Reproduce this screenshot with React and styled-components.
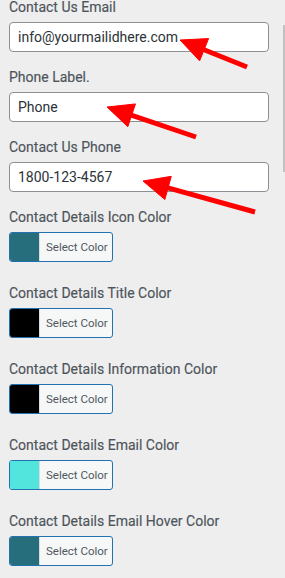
import React from 'react';
import styled, { createGlobalStyle } from 'styled-components';

const GlobalStyle = createGlobalStyle`
  html, body {
    margin: 0;
    padding: 0;
    background: #eeeeee;
    overflow: hidden;
  }
  * { box-sizing: border-box; }
`;

const Page = styled.div`
  position: relative;
  width: 285px;
  height: 578px;
  overflow: hidden;
  background: #eeeeee;
  font-family: Roboto, 'Liberation Sans', sans-serif;
`;

const Panel = styled.div`
  display: flex;
  flex-direction: column;
  margin-top: -1px;
  padding: 0 16px 0 9px;
`;

const Field = styled.div`
  display: flex;
  flex-direction: column;
  gap: 7px;
  margin-bottom: ${(p) => (p.$color ? '23px' : '17px')};
`;

const Label = styled.label`
  font-size: 14px;
  line-height: 16px;
  font-weight: 400;
  color: #4d545b;
  -webkit-text-stroke: 0.15px #4d545b;
  white-space: nowrap;
`;

const TextInput = styled.input`
  width: 260px;
  height: 30px;
  padding: 0 8px;
  border: 1px solid #8c8f94;
  border-radius: 4px;
  background: #ffffff;
  font-family: Roboto, 'Liberation Sans', sans-serif;
  font-size: 14px;
  color: #2c3338;
  outline: none;
`;

const ColorButton = styled.button`
  display: flex;
  align-items: stretch;
  width: 104px;
  height: 30px;
  padding: 0;
  border: 1px solid #2271b1;
  border-radius: 3px;
  background: #f6f7f7;
  overflow: hidden;
  cursor: pointer;
`;

const Swatch = styled.span`
  width: 30px;
  background: ${(p) => p.$color};
  border-right: 1px solid #dcdcde;
`;

const ButtonText = styled.span`
  flex: 1;
  display: flex;
  align-items: center;
  padding-left: 6px;
  font-family: Roboto, 'Liberation Sans', sans-serif;
  font-size: 11.5px;
  color: #50575e;
  white-space: nowrap;
`;

const ScrollThumb = styled.div`
  position: absolute;
  right: 0;
  top: 25px;
  width: 2.5px;
  height: 147px;
  background: #c1c1c1;
`;

const Arrows = styled.svg`
  position: absolute;
  left: 0;
  top: 0;
  pointer-events: none;
`;

const textFields = [
  { label: 'Contact Us Email', value: 'info@yourmailidhere.com' },
  { label: 'Phone Label.', value: 'Phone' },
  { label: 'Contact Us Phone', value: '1800-123-4567' },
];

const colorFields = [
  { label: 'Contact Details Icon Color', color: '#266e7b' },
  { label: 'Contact Details Title Color', color: '#000000' },
  { label: 'Contact Details Information Color', color: '#000000' },
  { label: 'Contact Details Email Color', color: '#52e5de' },
  { label: 'Contact Details Email Hover Color', color: '#266e7b' },
];

const arrows = [
  { tip: [180, 40], tail: [247, 67] },
  { tip: [107, 107], tail: [196, 137] },
  { tip: [143, 181], tail: [255, 212] },
];

const Arrow = ({ tip, tail }) => {
  const [x1, y1] = tip;
  const [x2, y2] = tail;
  const len = Math.hypot(x2 - x1, y2 - y1);
  const ux = (x2 - x1) / len;
  const uy = (y2 - y1) / len;
  const headLen = 26;
  const headW = 12;
  const bx = x1 + ux * headLen;
  const by = y1 + uy * headLen;
  const px = -uy * headW;
  const py = ux * headW;
  return (
    <g fill="#ff0000" stroke="#ff0000">
      <line x1={bx - ux * 2} y1={by - uy * 2} x2={x2} y2={y2} strokeWidth="5" />
      <polygon
        points={`${x1},${y1} ${bx + px},${by + py} ${bx - px},${by - py}`}
        strokeWidth="1"
        strokeLinejoin="round"
      />
    </g>
  );
};

export default function App() {
  return (
    <Page>
      <GlobalStyle />
      <Panel>
        {textFields.map((f) => (
          <Field key={f.label}>
            <Label>{f.label}</Label>
            <TextInput defaultValue={f.value} />
          </Field>
        ))}
        {colorFields.map((f) => (
          <Field key={f.label} $color>
            <Label>{f.label}</Label>
            <ColorButton type="button">
              <Swatch $color={f.color} />
              <ButtonText>Select Color</ButtonText>
            </ColorButton>
          </Field>
        ))}
      </Panel>
      <ScrollThumb />
      <Arrows width="285" height="578" viewBox="0 0 285 578">
        {arrows.map((a, i) => (
          <Arrow key={i} tip={a.tip} tail={a.tail} />
        ))}
      </Arrows>
    </Page>
  );
}
